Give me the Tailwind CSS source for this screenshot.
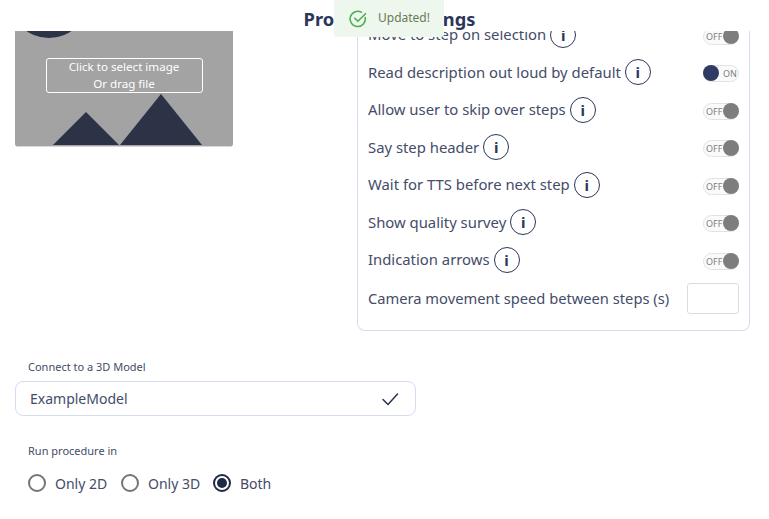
<!DOCTYPE html>
<html lang="en">
<head>
  <meta charset="UTF-8" />
  <title>Procedure settings</title>
  <script src="https://cdn.jsdelivr.net/npm/@tailwindcss/browser@4"></script>
</head>
<body class="bg-white font-['Noto_Sans',sans-serif] text-[#444c69] overflow-hidden">
  <div class="relative w-[769px] h-[519px] overflow-hidden">

    <!-- toast -->
    <div class="absolute left-[334px] top-0 w-[110px] h-[37px] bg-[#edf7ed] rounded-b-[3px] flex items-center pl-[15px] gap-[11px] z-10">
      <svg class="w-[18px] h-[18px]" viewBox="0 0 18 18" fill="none" stroke="#4caf50" stroke-width="1.6" stroke-linecap="round" stroke-linejoin="round">
        <path d="M16.2 7.6A7.6 7.6 0 1 1 12.3 2.2" />
        <path d="M5.8 8.2l3.1 3.1 7.6-7.6" />
      </svg>
      <span class="mt-[-1px] text-[12px] text-[#6b7a55]">Updated!</span>
    </div>

    <h1 class="h-[31px] pt-[5px] text-center text-[18.3px] leading-[28px] font-bold text-[#2c3659] pl-[10px]">Procedure settings</h1>

    <div class="flex items-start pl-[15px]">
      <!-- image picker -->
      <div class="relative w-[218px] h-[116px] bg-[#a3a3a3] rounded-b-[3px] overflow-hidden shrink-0 flex flex-col items-center border-b border-[#d8d8d8]">
        <div class="absolute left-[-6px] top-[-73px] w-[80px] h-[80px] rounded-full bg-[#2c3347]"></div>
        <svg class="absolute left-0 top-0" width="218" height="116" viewBox="0 0 218 116" fill="#2c3347">
          <path d="M38 114 71 81l33 33z" />
          <path d="M105 114 146 63l41 51z" />
        </svg>
        <div class="relative mt-[27px] w-[157px] h-[35px] border-[1.5px] border-white rounded-[3px] text-white text-[11.6px] leading-[16.5px] text-center">Click to select image<br />Or drag file</div>
      </div>

      <!-- settings panel -->
      <div class="ml-[124px] w-[393px] h-[300px] border border-t-0 border-[#d6dcf0] rounded-b-[8px] overflow-hidden shrink-0">
        <div class="mt-[-15px] pl-[10px] pr-[10px] text-[14.85px]">
          <div class="h-[37.5px] flex items-center justify-between">
            <div class="flex items-center gap-[4px]"><span class="mt-[-1px]">Move to step on selection</span>
              <span class="w-[26px] h-[26px] rounded-full border-[1.5px] border-[#2c3659] flex items-center justify-center text-[#2c3659] font-bold text-[15px]">i</span>
            </div>
            <div class="relative mt-[3px] w-[36px] h-[17px] rounded-full bg-[#fafafa] border border-[#e2e2e2] text-[9px] leading-[15px] pl-[2px] text-[#7d7d7d]">OFF<span class="absolute right-[-1px] top-[-1px] w-[16px] h-[16px] rounded-full bg-[#7d7d7d]"></span></div>
          </div>
          <div class="h-[37.5px] flex items-center justify-between">
            <div class="flex items-center gap-[4px]"><span class="mt-[-1px]">Read description out loud by default</span>
              <span class="w-[26px] h-[26px] rounded-full border-[1.5px] border-[#2c3659] flex items-center justify-center text-[#2c3659] font-bold text-[15px]">i</span>
            </div>
            <div class="relative mt-[3px] w-[36px] h-[17px] rounded-full bg-[#fafafa] border border-[#e2e2e2] text-[9px] leading-[15px] pl-[19px] text-[#7d7d7d]"><span class="absolute left-[-1px] top-[-1px] w-[16px] h-[16px] rounded-full bg-[#2f3b63]"></span>ON</div>
          </div>
          <div class="h-[37.5px] flex items-center justify-between">
            <div class="flex items-center gap-[4px]"><span class="mt-[-1px]">Allow user to skip over steps</span>
              <span class="w-[26px] h-[26px] rounded-full border-[1.5px] border-[#2c3659] flex items-center justify-center text-[#2c3659] font-bold text-[15px]">i</span>
            </div>
            <div class="relative mt-[3px] w-[36px] h-[17px] rounded-full bg-[#fafafa] border border-[#e2e2e2] text-[9px] leading-[15px] pl-[2px] text-[#7d7d7d]">OFF<span class="absolute right-[-1px] top-[-1px] w-[16px] h-[16px] rounded-full bg-[#7d7d7d]"></span></div>
          </div>
          <div class="h-[37.5px] flex items-center justify-between">
            <div class="flex items-center gap-[4px]"><span class="mt-[-1px]">Say step header</span>
              <span class="w-[26px] h-[26px] rounded-full border-[1.5px] border-[#2c3659] flex items-center justify-center text-[#2c3659] font-bold text-[15px]">i</span>
            </div>
            <div class="relative mt-[3px] w-[36px] h-[17px] rounded-full bg-[#fafafa] border border-[#e2e2e2] text-[9px] leading-[15px] pl-[2px] text-[#7d7d7d]">OFF<span class="absolute right-[-1px] top-[-1px] w-[16px] h-[16px] rounded-full bg-[#7d7d7d]"></span></div>
          </div>
          <div class="h-[37.5px] flex items-center justify-between">
            <div class="flex items-center gap-[4px]"><span class="mt-[-1px]">Wait for TTS before next step</span>
              <span class="w-[26px] h-[26px] rounded-full border-[1.5px] border-[#2c3659] flex items-center justify-center text-[#2c3659] font-bold text-[15px]">i</span>
            </div>
            <div class="relative mt-[3px] w-[36px] h-[17px] rounded-full bg-[#fafafa] border border-[#e2e2e2] text-[9px] leading-[15px] pl-[2px] text-[#7d7d7d]">OFF<span class="absolute right-[-1px] top-[-1px] w-[16px] h-[16px] rounded-full bg-[#7d7d7d]"></span></div>
          </div>
          <div class="h-[37.5px] flex items-center justify-between">
            <div class="flex items-center gap-[4px]"><span class="mt-[-1px]">Show quality survey</span>
              <span class="w-[26px] h-[26px] rounded-full border-[1.5px] border-[#2c3659] flex items-center justify-center text-[#2c3659] font-bold text-[15px]">i</span>
            </div>
            <div class="relative mt-[3px] w-[36px] h-[17px] rounded-full bg-[#fafafa] border border-[#e2e2e2] text-[9px] leading-[15px] pl-[2px] text-[#7d7d7d]">OFF<span class="absolute right-[-1px] top-[-1px] w-[16px] h-[16px] rounded-full bg-[#7d7d7d]"></span></div>
          </div>
          <div class="h-[37.5px] flex items-center justify-between">
            <div class="flex items-center gap-[4px]"><span class="mt-[-1px]">Indication arrows</span>
              <span class="w-[26px] h-[26px] rounded-full border-[1.5px] border-[#2c3659] flex items-center justify-center text-[#2c3659] font-bold text-[15px]">i</span>
            </div>
            <div class="relative mt-[3px] w-[36px] h-[17px] rounded-full bg-[#fafafa] border border-[#e2e2e2] text-[9px] leading-[15px] pl-[2px] text-[#7d7d7d]">OFF<span class="absolute right-[-1px] top-[-1px] w-[16px] h-[16px] rounded-full bg-[#7d7d7d]"></span></div>
          </div>
          <div class="h-[40px] flex items-center justify-between">
            <span class="whitespace-nowrap text-[14.7px]">Camera movement speed between steps (s)</span>
            <div class="w-[52px] h-[31px] border border-[#dcdcdc] rounded-[3px] shrink-0"></div>
          </div>
        </div>
      </div>
    </div>

    <!-- model + run options -->
    <div class="pl-[15px] mt-[27px]">
      <div class="pl-[13px] text-[11px] leading-[17px]">Connect to a 3D Model</div>
      <div class="mt-[6px] w-[401px] h-[35px] border-[1.5px] border-[#d6dcf0] rounded-[8px] flex items-center justify-between pl-[14px] pr-[16px] text-[14px]">
        <span>ExampleModel</span>
        <svg class="w-[18px] h-[18px]" viewBox="0 0 18 18" fill="none" stroke="#2c3347" stroke-width="1.5" stroke-linecap="round" stroke-linejoin="round"><path d="M2 9.5l5 5L16.5 4" /></svg>
      </div>
      <div class="mt-[26px] pl-[13px] text-[11px] leading-[18px]">Run procedure in</div>
      <div class="mt-[13px] pl-[13px] flex items-center text-[14px] h-[20px]">
        <span class="w-[18px] h-[18px] rounded-full border-2 border-[#757575]"></span>
        <span class="ml-[9px] w-[51px] whitespace-nowrap">Only 2D</span>
        <span class="ml-[15px] w-[18px] h-[18px] rounded-full border-2 border-[#757575]"></span>
        <span class="ml-[9px] w-[51px] whitespace-nowrap">Only 3D</span>
        <span class="ml-[14px] w-[18px] h-[18px] rounded-full border-2 border-[#1f2a44] flex items-center justify-center"><span class="w-[10px] h-[10px] rounded-full bg-[#1f2a44]"></span></span>
        <span class="ml-[9px]">Both</span>
      </div>
    </div>
  </div>
</body>
</html>
